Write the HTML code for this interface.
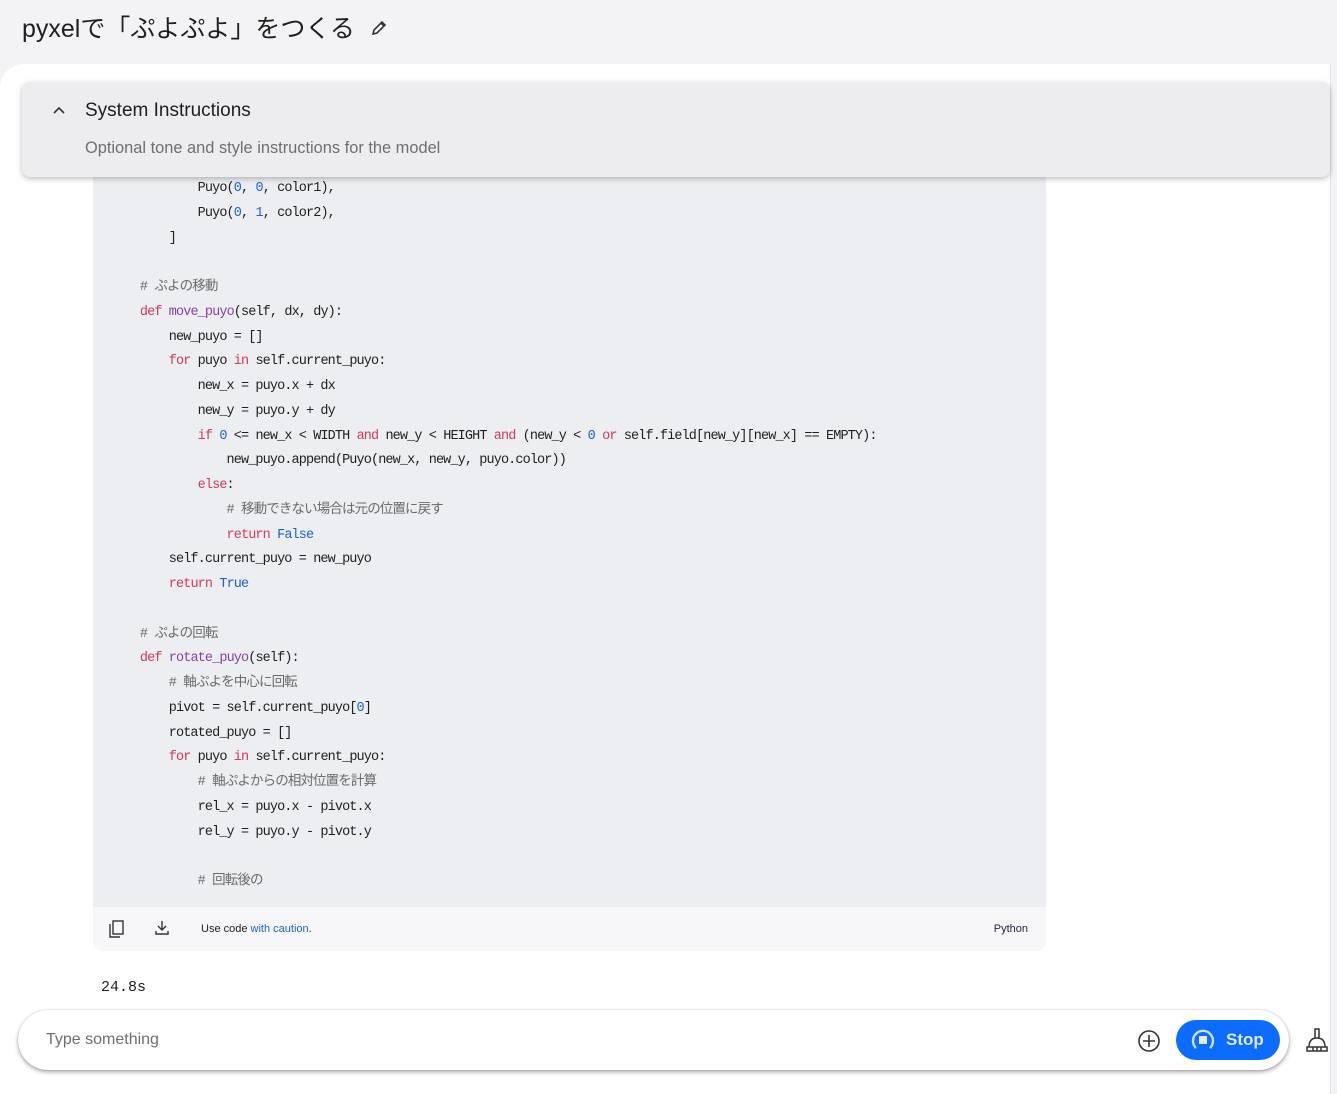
<!DOCTYPE html>
<html><head><meta charset="utf-8"><style>
body{margin:0;width:1337px;height:1082px;background:#f3f3f5;font-family:"Liberation Sans","Noto Sans CJK JP",sans-serif;position:relative;overflow:hidden}
.title{position:absolute;left:22px;top:9px;font-size:25px;color:#1f1f1f;font-family:"Liberation Sans","Noto Sans CJK JP",sans-serif}
.card{position:absolute;left:0;top:64px;width:1330px;height:1030px;background:#fff;border-radius:24px 0 0 0;border-right:1px solid #e2e2e2}
.sys{position:absolute;left:22px;top:82px;width:1308px;height:95px;background:#ededf0;border-radius:8px;box-shadow:0 2px 6px rgba(0,0,0,.25);z-index:3}
.sys .h{position:absolute;left:63px;top:18px;font-size:19px;color:#1f1f1f}
.sys .s{position:absolute;left:63px;top:57px;font-size:16.4px;color:#6f6f6f}
.code{position:absolute;left:93px;top:150px;width:953px;height:757px;background:#edeef1}
pre{position:absolute;left:111px;top:177px;margin:0;font-family:"Liberation Mono","Noto Sans CJK JP",monospace;font-size:13.5px;letter-spacing:-0.88px;line-height:24.75px;color:#1f1f1f;z-index:1}
.k{color:#d03a5b}.n{color:#1a62d6}.f{color:#8a3fb0}.c{color:#6b6b6b}
.foot{position:absolute;left:93px;top:907px;width:953px;height:44px;background:#f7f7f9;border-radius:0 0 10px 10px}
.foot .u{position:absolute;left:108px;top:16px;font-size:11px;color:#1f1f1f}
.foot .p{position:absolute;right:18px;top:16px;font-size:11px;color:#2b2140}
.time{position:absolute;left:101px;top:979px;font-family:"Liberation Mono",monospace;font-size:15px;color:#1f1f1f}
.inp{position:absolute;left:18px;top:1010px;width:1271px;height:60px;background:#fff;border-radius:30px;box-shadow:0 2px 4px rgba(0,0,0,.35),0 0 1px rgba(0,0,0,.3)}
.inp .ph{position:absolute;left:28px;top:21px;font-size:16px;color:#6f6f6f}
.stop{position:absolute;left:1158px;top:10px;width:104px;height:40px;background:#0b6cff;border-radius:20px;color:#dfe9ff;font-size:17px;font-weight:bold}
</style></head><body>
<div class="title">pyxelで「ぷよぷよ」をつくる</div>
<svg style="position:absolute;left:370px;top:19px" width="18" height="18" viewBox="0 0 18 18"><path d="M3 15l1-4 8-8 3 3-8 8z M11 4l3 3" fill="none" stroke="#333" stroke-width="1.6"/></svg>
<div class="card"></div>
<div class="sys">
<svg style="position:absolute;left:31px;top:24px" width="12" height="10" viewBox="0 0 12 10"><path d="M1 7l5-5 5 5" fill="none" stroke="#333" stroke-width="1.6"/></svg>
<div class="h">System Instructions</div>
<div class="s">Optional tone and style instructions for the model</div>
</div>
<div class="code"></div>
<pre>            Puyo(<span class="n">0</span>, <span class="n">0</span>, color1),
            Puyo(<span class="n">0</span>, <span class="n">1</span>, color2),
        ]

    <span class="c"># ぷよの移動</span>
    <span class="k">def</span> <span class="f">move_puyo</span>(self, dx, dy):
        new_puyo = []
        <span class="k">for</span> puyo <span class="k">in</span> self.current_puyo:
            new_x = puyo.x + dx
            new_y = puyo.y + dy
            <span class="k">if</span> <span class="n">0</span> &lt;= new_x &lt; WIDTH <span class="k">and</span> new_y &lt; HEIGHT <span class="k">and</span> (new_y &lt; <span class="n">0</span> <span class="k">or</span> self.field[new_y][new_x] == EMPTY):
                new_puyo.append(Puyo(new_x, new_y, puyo.color))
            <span class="k">else</span>:
                <span class="c"># 移動できない場合は元の位置に戻す</span>
                <span class="k">return</span> <span class="n">False</span>
        self.current_puyo = new_puyo
        <span class="k">return</span> <span class="n">True</span>

    <span class="c"># ぷよの回転</span>
    <span class="k">def</span> <span class="f">rotate_puyo</span>(self):
        <span class="c"># 軸ぷよを中心に回転</span>
        pivot = self.current_puyo[<span class="n">0</span>]
        rotated_puyo = []
        <span class="k">for</span> puyo <span class="k">in</span> self.current_puyo:
            <span class="c"># 軸ぷよからの相対位置を計算</span>
            rel_x = puyo.x - pivot.x
            rel_y = puyo.y - pivot.y

            <span class="c"># 回転後の</span></pre>
<div class="foot">
<svg style="position:absolute;left:16px;top:13px" width="16" height="18" viewBox="0 0 16 18"><rect x="4" y="1" width="10" height="13" fill="none" stroke="#333" stroke-width="1.4"/><path d="M1 4v13h10" fill="none" stroke="#333" stroke-width="1.4"/></svg>
<svg style="position:absolute;left:61px;top:13px" width="16" height="16" viewBox="0 0 16 16"><path d="M8 1v9M4 6l4 4 4-4M2 11v3h12v-3" fill="none" stroke="#333" stroke-width="1.4"/></svg>
<div class="u">Use code <span style="color:#1a62d6">with caution</span>.</div>
<div class="p">Python</div>
</div>
<div class="time">24.8s</div>
<div class="inp">
<div class="ph">Type something</div>
<svg style="position:absolute;left:1119px;top:19px" width="24" height="24" viewBox="0 0 24 24"><circle cx="12" cy="12" r="10" fill="none" stroke="#333" stroke-width="1.6"/><path d="M12 6v12M6 12h12" stroke="#333" stroke-width="1.6"/></svg>
<div class="stop">
<svg style="position:absolute;left:14px;top:8px" width="26" height="24" viewBox="0 0 26 24"><path d="M6 20A10 10 0 1 1 20 20" fill="none" stroke="#cfe0ff" stroke-width="2.4"/><rect x="9" y="8" width="8" height="8" fill="#e6e9ef"/></svg>
<span style="position:absolute;left:50px;top:10px">Stop</span>
</div>
</div>
<svg style="position:absolute;left:1305px;top:1027px" width="24" height="26" viewBox="0 0 24 26"><path d="M10 2h4v9h-4z M4 20q0-9 8-9q8 0 8 9z M2 20h20v4H2z M8 20v4M12 20v4M16 20v4" fill="none" stroke="#333" stroke-width="1.5"/></svg>
</body></html>
